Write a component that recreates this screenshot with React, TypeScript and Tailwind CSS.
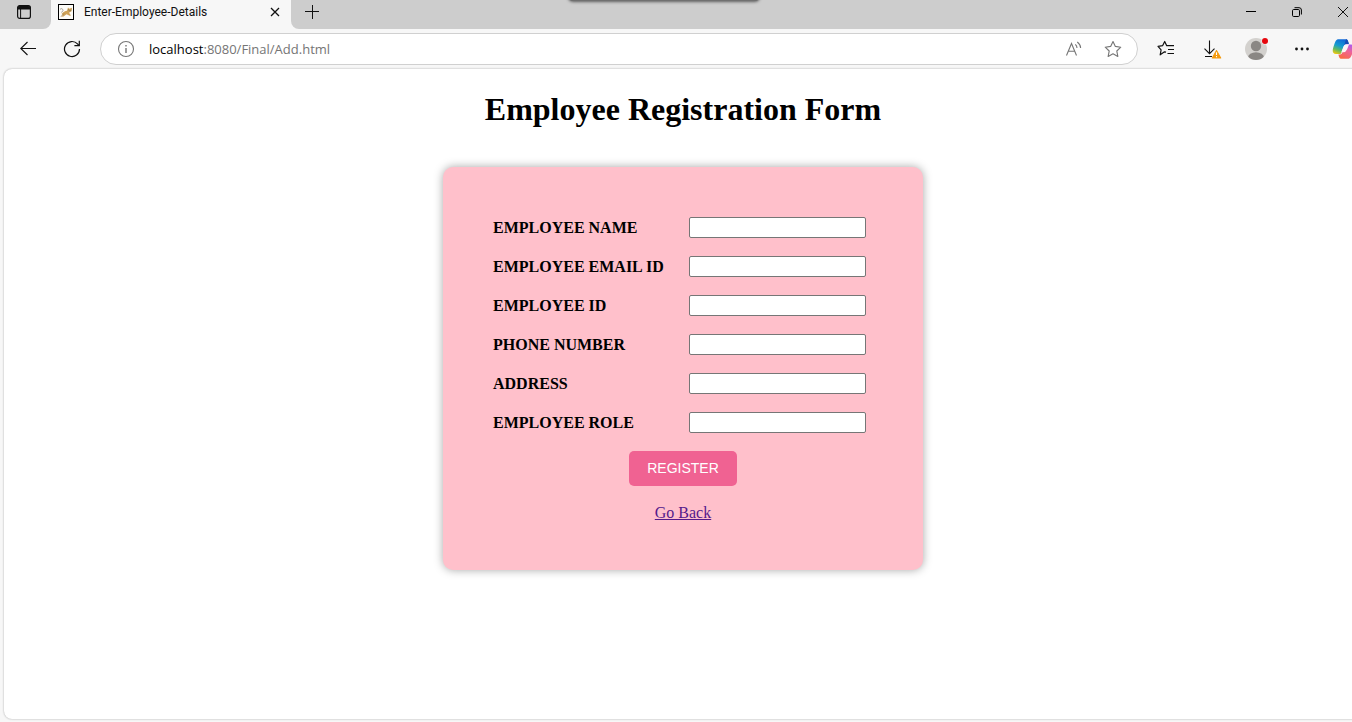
import React from "react";

const FIELDS = [
  { id: "name", label: "EMPLOYEE NAME" },
  { id: "email", label: "EMPLOYEE EMAIL ID" },
  { id: "employee-id", label: "EMPLOYEE ID" },
  { id: "phone", label: "PHONE NUMBER" },
  { id: "address", label: "ADDRESS" },
  { id: "role", label: "EMPLOYEE ROLE" },
];

const STAR = "M8 1.3l2.1 4.4 4.8.7-3.5 3.4.9 4.8L8 12.3l-4.3 2.3.9-4.8L1.1 6.4l4.8-.7z";

function IconButton({ label, className, children }: { label: string; className: string; children: React.ReactNode }) {
  return (
    <button type="button" aria-label={label} className={`flex h-8 shrink-0 items-center justify-center ${className}`}>
      {children}
    </button>
  );
}

function TabBar() {
  return (
    <header className="relative flex h-[29px] bg-[#f7f7f7]">
      <div className="flex w-[51px] shrink-0 items-start rounded-br-lg bg-[#cdcdcd] pl-4">
        <button type="button" aria-label="Tab actions" className="mt-1 flex h-4 w-4 items-center justify-center">
          <svg width="16" height="16" viewBox="0 0 16 16" fill="none" stroke="#111">
            <rect x="1.6" y="1.6" width="12.8" height="12.8" rx="2.2" strokeWidth="1.2" />
            <path d="M2 3.8Q2 2 3.8 2h8.4Q14 2 14 3.8V5H2z" fill="#111" />
            <path d="M4.6 5v9" strokeWidth="1" />
          </svg>
        </button>
      </div>
      <div className="flex w-60 shrink-0 items-start pl-[7px] pr-2">
        <svg className="mt-1 shrink-0" width="16" height="16" viewBox="0 0 16 16">
          <rect x=".5" y=".5" width="15" height="15" fill="#fdfcf8" stroke="#000" />
          <path d="M2 5.500C3 4 5 4.500 5 6.500L3.500 8.500" fill="none" stroke="#a8a298" />
          <path d="M3.500 10c1.500-2 3.500-3 5.500-3.300l1-3.200 1.300 1.200L14 3.800l-.5 3.400-2.500 1.600 2 2.700-1.300.3L8.500 10.200 5.500 12.500l-2.500.2 2-1.800z" fill="#cfa257" />
          <path d="M3 12.500L6 9.500M10.300 5l1 2 2-1" fill="none" stroke="#857250" strokeWidth=".7" />
        </svg>
        <span className="ml-[10px] flex-1 whitespace-nowrap font-['Roboto',sans-serif] text-[12px] leading-6 text-[#111]">
          Enter-Employee-Details
        </span>
        <button type="button" aria-label="Close tab" className="mt-1 flex h-4 w-4 items-center justify-center">
          <svg width="10" height="10" viewBox="0 0 10 10" stroke="#111" strokeWidth="1.3">
            <path d="M1 1l8 8M9 1L1 9" />
          </svg>
        </button>
      </div>
      <div className="flex min-w-0 flex-1 items-start justify-between rounded-bl-lg bg-[#cdcdcd] pl-[11px]">
        <button type="button" aria-label="New tab" className="flex h-6 w-5 items-center justify-center">
          <svg width="14" height="14" viewBox="0 0 14 14" stroke="#111" strokeWidth="1">
            <path d="M7.500 0v14M0 6.500h14" />
          </svg>
        </button>
        <div className="-mr-[14px] flex shrink-0">
          <button type="button" aria-label="Minimize" className="flex h-6 w-[46px] items-center justify-center">
            <svg width="10" height="10" viewBox="0 0 10 10" stroke="#000">
              <path d="M0 4.500h10" />
            </svg>
          </button>
          <button type="button" aria-label="Restore" className="flex h-6 w-[46px] items-center justify-center">
            <svg width="10" height="10" viewBox="0 0 10 10" fill="none" stroke="#000">
              <rect x=".5" y="2.500" width="7" height="7" rx="1.200" />
              <path d="M2.500 .7h4.500Q9.400 .7 9.400 3v4.500" />
            </svg>
          </button>
          <button type="button" aria-label="Close window" className="flex h-6 w-[46px] items-center justify-center">
            <svg width="10" height="10" viewBox="0 0 10 10" stroke="#111">
              <path d="M0 0l10 10M10 0L0 10" />
            </svg>
          </button>
        </div>
      </div>
      <div className="absolute -top-2 left-1/2 ml-[-107px] h-[9px] w-[190px] rounded-sm bg-[#707070] shadow-[0_0_3px_1px_#606060]" />
    </header>
  );
}

function Toolbar() {
  return (
    <nav className="-mr-[7px] flex h-10 items-center bg-[#f7f7f7] pl-[6px]">
      <IconButton label="Back" className="w-11">
        <svg width="16" height="16" viewBox="0 0 16 16" fill="none" stroke="#111" strokeWidth="1.1">
          <path d="M16 7.500H.8M7.500 1L.8 7.500l6.700 6.500" />
        </svg>
      </IconButton>
      <IconButton label="Refresh" className="w-11">
        <svg width="18" height="18" viewBox="0 0 18 18" fill="none" stroke="#111" strokeWidth="1.2">
          <path d="M16.500 9A7.500 7.500 0 1 1 14.500 3.900L16 5.500" />
          <path d="M16.300 .8v4.900h-4.900" />
        </svg>
      </IconButton>
      <div className="ml-[6px] mr-[5px] flex h-8 min-w-0 flex-1 items-center rounded-full border border-[#d0d0d0] bg-white pl-4 pr-1">
        <button type="button" aria-label="Site information" className="flex h-5 w-[18px] items-center justify-center">
          <svg width="18" height="18" viewBox="0 0 18 18" fill="none" stroke="#767676">
            <circle cx="9" cy="9" r="7.500" strokeWidth="1.100" />
            <path d="M9 8v5M9 5v1.500" strokeWidth="1.400" />
          </svg>
        </button>
        <div className="ml-[14px] flex-1 whitespace-nowrap text-[13px] leading-5 text-[#757575]">
          <span className="text-black">localhost</span>:8080/Final/Add.html
        </div>
        <IconButton label="Read aloud" className="w-[38px]">
          <svg width="18" height="16" viewBox="0 0 18 16" fill="none" stroke="#767676" strokeWidth="1.100">
            <path d="M1.500 14.500L6.500 2.500l5 12M3.300 10.300h6.400M10.300 3.300Q12 4.800 12 7M12.300 1Q15.600 3.500 15.600 7" />
          </svg>
        </IconButton>
        <IconButton label="Add to favorites" className="w-10">
          <svg width="18" height="18" viewBox="0 0 16 16" fill="none" stroke="#767676" strokeLinejoin="round">
            <path d={STAR} />
          </svg>
        </IconButton>
      </div>
      <IconButton label="Favorites" className="w-[46px]">
        <svg width="18" height="18" viewBox="0 0 18 18" fill="none" stroke="#111" strokeWidth="1.200" strokeLinejoin="round">
          <path d="M9 12.200L7.500 11.800l-4.300 3 .9-5L1 6.400l4.700-.8L7.700 1.500l2 4.200H17M11 9.500h6M10.500 13.500H17" />
        </svg>
      </IconButton>
      <IconButton label="Downloads" className="w-[46px]">
        <svg width="20" height="20" viewBox="0 0 20 20" fill="none" stroke="#111" strokeWidth="1.100">
          <path d="M7.500 1.500v13M2.500 9.700l5 5 5-5M3 17.500h7" />
          <path d="M14.500 11.500l4.200 7.500h-8.400z" fill="#f59a0c" stroke="#f59a0c" strokeLinejoin="round" />
          <path d="M14.500 13.300v2.800M14.500 17.100v1.200" stroke="#fff" />
        </svg>
      </IconButton>
      <IconButton label="Profile" className="w-[42px]">
        <svg width="24" height="24" viewBox="0 0 24 24">
          <defs>
            <clipPath id="avatar">
              <circle cx="12" cy="12" r="11" />
            </clipPath>
          </defs>
          <circle cx="12" cy="12" r="11" fill="#d3d1ce" />
          <circle cx="12" cy="9" r="5.200" fill="#8a8784" />
          <ellipse cx="12" cy="20.500" rx="8" ry="5.200" fill="#8a8784" clipPath="url(#avatar)" />
          <circle cx="21" cy="4" r="3.500" fill="#f7f7f7" />
          <circle cx="21" cy="4" r="3" fill="#e6060d" />
        </svg>
      </IconButton>
      <IconButton label="Settings and more" className="w-[50px]">
        <svg width="16" height="4" viewBox="0 0 16 4" fill="#111">
          <circle cx="2.500" cy="2" r="1.400" />
          <circle cx="8" cy="2" r="1.400" />
          <circle cx="13.500" cy="2" r="1.400" />
        </svg>
      </IconButton>
      <IconButton label="Copilot" className="w-8">
        <svg width="22" height="20" viewBox="0 0 22 20">
          <defs>
            <linearGradient id="cool" x1=".6" y1="0" x2=".2" y2="1">
              <stop offset="0" stopColor="#1268d8" />
              <stop offset=".45" stopColor="#149cd0" />
              <stop offset=".72" stopColor="#62ba60" />
              <stop offset="1" stopColor="#f3c70e" />
            </linearGradient>
            <linearGradient id="warm" x1=".75" y1="0" x2=".2" y2="1">
              <stop offset="0" stopColor="#b35bea" />
              <stop offset=".4" stopColor="#ef6397" />
              <stop offset="1" stopColor="#fa6a3c" />
            </linearGradient>
          </defs>
          <path d="M13.500 5.500h5c2.500 0 3.500 2 3 4.500-.6 3-1.500 5.500-2.500 7.500-.8 1.600-1.700 2.300-3.500 2.300H9c-1.500 0-2-1.800-2.600-4.300H8c1.500 0 2-1 2.500-2.500z" fill="url(#warm)" />
          <path d="M7 .2h7c1.600 0 2.200 1.800 2.800 4.800h-2.300c-1.600 0-2.300 1-2.800 2.500l-2 5.500c-.5 1.500-1 2-2.200 2H4C1.500 15 .3 13 .8 10.500 1.500 7 2.400 5 3.400 2.500 4.200.8 5.200.2 7 .2z" fill="url(#cool)" />
          <path d="M14 .2c1.600 0 2.200 1.800 2.800 4.800h-2.300c-1.100 0-1.800.4-2.300 1.300z" fill="#174bb5" />
          <path d="M11.500 7.500Q12.500 5.400 14.500 5.400h2.500L15 10.500Q14 13.200 11 13.200H9.300z" fill="#fdf4f7" />
        </svg>
      </IconButton>
    </nav>
  );
}

function RegistrationPage() {
  return (
    <main className="-mr-[10px] ml-1 flex flex-1 flex-col items-center rounded-lg bg-white pb-8 pt-[22px] font-['Liberation_Serif',serif] text-black shadow-[0_0_2px_#a0a0a0]">
      <h1 className="text-[32px] font-bold leading-9">Employee Registration Form</h1>
      <form
        className="mt-10 flex w-[480px] max-w-full flex-col items-center rounded-[10px] bg-[#ffc0cb] px-[50px] pb-12 pt-[50px] shadow-[0_0_10px_rgba(0,0,0,0.35)]"
        onSubmit={(event) => event.preventDefault()}
      >
        <div className="flex flex-col gap-[18px] self-stretch">
          {FIELDS.map((field) => (
            <div key={field.id} className="flex h-[21px] items-center">
              <label htmlFor={field.id} className="w-[196px] text-[16px] font-bold leading-5">
                {field.label}
              </label>
              <input
                id={field.id}
                name={field.id}
                type="text"
                className="h-[21px] w-[177px] rounded-[2px] border border-[#767676] bg-white px-px font-['Liberation_Sans',sans-serif] text-[13px]"
              />
            </div>
          ))}
        </div>
        <button
          type="submit"
          className="mt-[18px] rounded-[5px] bg-[#f06292] px-[18px] py-2 font-['Liberation_Sans',sans-serif] text-[14px] leading-[19px] text-white"
        >
          REGISTER
        </button>
        <a href="#back" className="mt-[18px] text-[16px] leading-[18px] text-[#551a8b] underline">
          Go Back
        </a>
      </form>
    </main>
  );
}

export default function App() {
  return (
    <div className="flex min-h-screen flex-col overflow-hidden bg-[#f7f7f7] pb-[3px] font-['Open_Sans',sans-serif]">
      <TabBar />
      <Toolbar />
      <RegistrationPage />
    </div>
  );
}
